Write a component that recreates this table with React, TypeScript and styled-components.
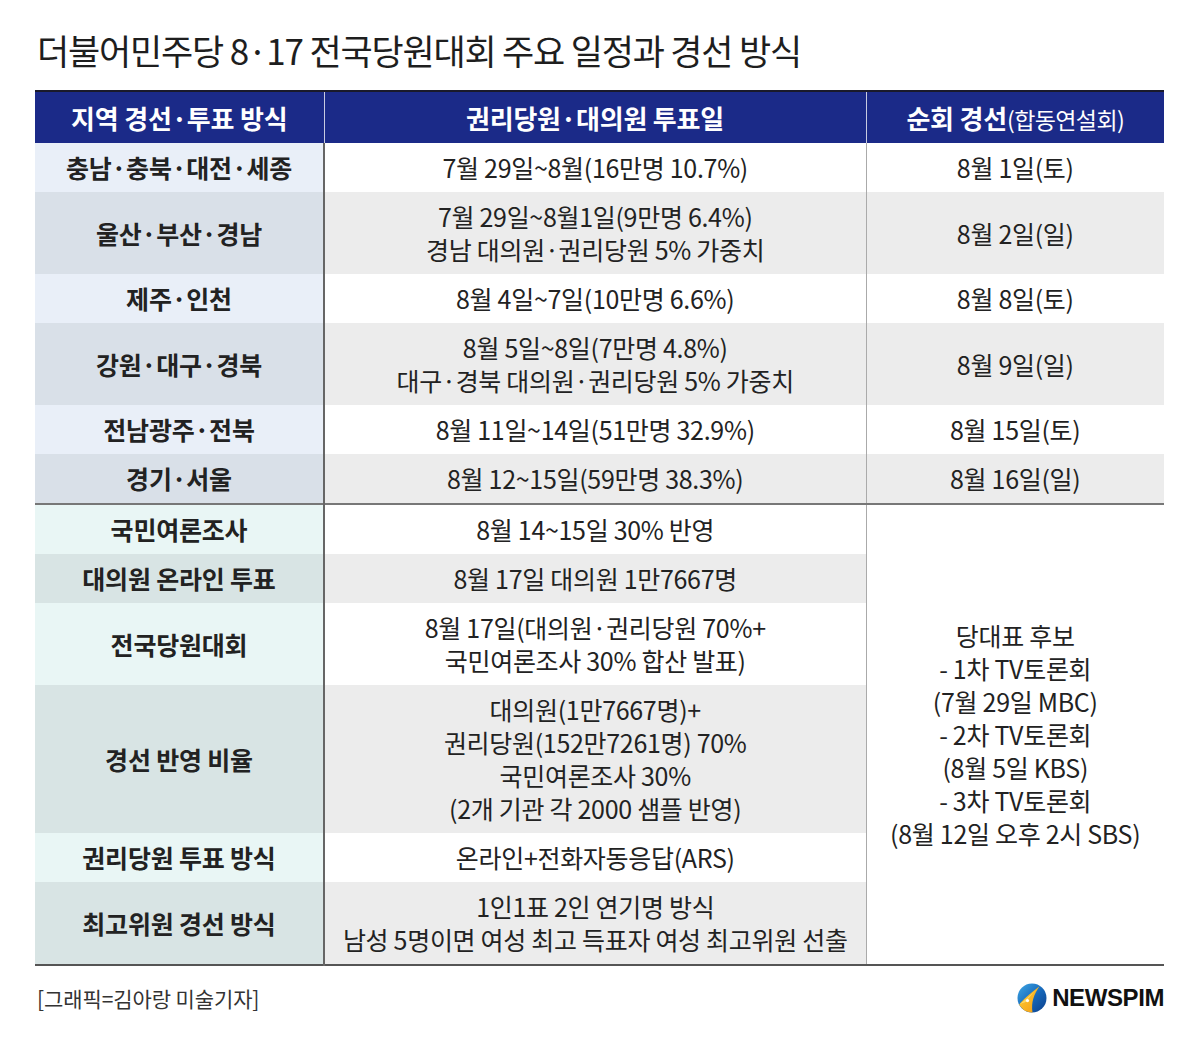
import React from "react";
import styled, { createGlobalStyle } from "styled-components";

const Global = createGlobalStyle`
  html, body { margin: 0; padding: 0; background: #fff; }
  body { font-family: "Noto Sans CJK KR", "Noto Sans", sans-serif; color: #222; }
`;

const Page = styled.div`
  width: 1200px;
  height: 1048px;
  box-sizing: border-box;
  padding: 29px 36px 0 35px;
  display: flex;
  flex-direction: column;
`;

const Title = styled.h1`
  margin: 0 0 0 2px;
  font-size: 35px;
  line-height: 42px;
  font-weight: 400;
  letter-spacing: -1.2px;
  color: #1e1e1e;
`;

const Table = styled.table`
  margin-top: 19px;
  width: 1129px;
  border-collapse: collapse;
  table-layout: fixed;
  border-bottom: 2px solid #555;
`;

const HeadCell = styled.th<{ $last?: boolean }>`
  background: #1b2a88;
  color: #fff;
  height: 52px;
  padding: 0;
  box-sizing: border-box;
  font-size: 26px;
  font-weight: 700;
  letter-spacing: -0.2px;
  border-top: 2px solid #1a1a2a;
  border-right: ${(p) => (p.$last ? "none" : "1px solid #c8cbe0")};
  text-align: center;
  vertical-align: middle;
`;

const Light = styled.span`
  font-weight: 400;
  font-size: 23px;
  letter-spacing: -0.6px;
`;

const LabelCell = styled.td<{ $bg: string; $sep?: boolean }>`
  background: ${(p) => p.$bg};
  font-weight: 700;
  font-size: 25px;
  line-height: 33px;
  letter-spacing: -0.2px;
  color: #222;
  text-align: center;
  vertical-align: middle;
  padding: 8px 0;
  border-right: 2px solid #666;
  border-top: ${(p) => (p.$sep ? "2px solid #777" : "none")};
`;

const DataCell = styled.td<{ $bg: string; $sep?: boolean; $right?: boolean }>`
  background: ${(p) => p.$bg};
  font-weight: 400;
  font-size: 25px;
  line-height: 33px;
  letter-spacing: -0.3px;
  color: #222;
  text-align: center;
  vertical-align: middle;
  padding: 8px 0;
  border-right: ${(p) => (p.$right ? "none" : "1px solid #aaa")};
  border-top: ${(p) => (p.$sep ? "2px solid #777" : "none")};
  white-space: nowrap;
`;

const Footer = styled.div`
  margin-top: 17px;
  display: flex;
  align-items: center;
  justify-content: space-between;
`;

const Credit = styled.div`
  font-size: 21px;
  letter-spacing: -0.1px;
  color: #333;
  padding-left: 2px;
`;

const Logo = styled.div`
  display: flex;
  align-items: center;
  gap: 5px;
`;

const LogoText = styled.span`
  font-family: "Liberation Sans", Arial, sans-serif;
  font-weight: 700;
  font-size: 24px;
  letter-spacing: -0.4px;
  color: #111;
`;

type Row = { label: string; data: string[]; third?: string[] };

const top: Row[] = [
  { label: "충남·충북·대전·세종", data: ["7월 29일~8월(16만명 10.7%)"], third: ["8월 1일(토)"] },
  { label: "울산·부산·경남", data: ["7월 29일~8월1일(9만명 6.4%)", "경남 대의원·권리당원 5% 가중치"], third: ["8월 2일(일)"] },
  { label: "제주·인천", data: ["8월 4일~7일(10만명 6.6%)"], third: ["8월 8일(토)"] },
  { label: "강원·대구·경북", data: ["8월 5일~8일(7만명 4.8%)", "대구·경북 대의원·권리당원 5% 가중치"], third: ["8월 9일(일)"] },
  { label: "전남광주·전북", data: ["8월 11일~14일(51만명 32.9%)"], third: ["8월 15일(토)"] },
  { label: "경기·서울", data: ["8월 12~15일(59만명 38.3%)"], third: ["8월 16일(일)"] },
];

const bottom: Row[] = [
  { label: "국민여론조사", data: ["8월 14~15일 30% 반영"] },
  { label: "대의원 온라인 투표", data: ["8월 17일 대의원 1만7667명"] },
  { label: "전국당원대회", data: ["8월 17일(대의원·권리당원 70%+", "국민여론조사 30% 합산 발표)"] },
  { label: "경선 반영 비율", data: ["대의원(1만7667명)+", "권리당원(152만7261명) 70%", "국민여론조사 30%", "(2개 기관 각 2000 샘플 반영)"] },
  { label: "권리당원 투표 방식", data: ["온라인+전화자동응답(ARS)"] },
  { label: "최고위원 경선 방식", data: ["1인1표 2인 연기명 방식", "남성 5명이면 여성 최고 득표자 여성 최고위원 선출"] },
];

const rightBlock = [
  "당대표 후보",
  "- 1차 TV토론회",
  "(7월 29일 MBC)",
  "- 2차 TV토론회",
  "(8월 5일 KBS)",
  "- 3차 TV토론회",
  "(8월 12일 오후 2시 SBS)",
];

const Lines = ({ lines }: { lines: string[] }) => (
  <>
    {lines.map((l, i) => (
      <React.Fragment key={i}>
        {i > 0 && <br />}
        {l}
      </React.Fragment>
    ))}
  </>
);

const LogoMark = () => (
  <svg width="30" height="30" viewBox="0 0 30 30">
    <defs>
      <linearGradient id="lgb" x1="0" y1="0" x2="1" y2="1">
        <stop offset="0" stopColor="#3fa9e6" />
        <stop offset="0.55" stopColor="#1565b8" />
        <stop offset="1" stopColor="#0d3f8a" />
      </linearGradient>
      <linearGradient id="lgy" x1="0" y1="0" x2="1" y2="1">
        <stop offset="0" stopColor="#ffd23a" />
        <stop offset="1" stopColor="#f29a12" />
      </linearGradient>
    </defs>
    <circle cx="15" cy="15" r="14.5" fill="url(#lgb)" />
    <path d="M2.2 21.5 C6 17 11 12 22.5 3.2 C17 11 14 19 15.5 29.4 C12 29.4 9 28.8 6.5 26.8 C5 25.2 3.2 23.6 2.2 21.5 Z" fill="url(#lgy)" />
    <path d="M2.2 21.5 C7 18 12 14 22.5 3.2 C14 12 10 16.5 9.5 18.5 C6.5 19.8 4.5 20.5 2.2 21.5 Z" fill="#fbe27a" opacity="0.8" />
    <circle cx="10.5" cy="17.6" r="1.6" fill="#fff" />
  </svg>
);

export default function App() {
  return (
    <>
      <Global />
      <Page>
        <Title>더불어민주당 8·17 전국당원대회 주요 일정과 경선 방식</Title>
        <Table>
          <colgroup>
            <col style={{ width: 289 }} />
            <col style={{ width: 542 }} />
            <col style={{ width: 298 }} />
          </colgroup>
          <thead>
            <tr>
              <HeadCell>지역 경선·투표 방식</HeadCell>
              <HeadCell>권리당원·대의원 투표일</HeadCell>
              <HeadCell $last>
                순회 경선<Light>(합동연설회)</Light>
              </HeadCell>
            </tr>
          </thead>
          <tbody>
            {top.map((r, i) => {
              const odd = i % 2 === 1;
              return (
                <tr key={r.label}>
                  <LabelCell $bg={odd ? "#d9e0e8" : "#e9eff8"}>{r.label}</LabelCell>
                  <DataCell $bg={odd ? "#ececec" : "#ffffff"}>
                    <Lines lines={r.data} />
                  </DataCell>
                  <DataCell $bg={odd ? "#ececec" : "#ffffff"} $right>
                    <Lines lines={r.third || []} />
                  </DataCell>
                </tr>
              );
            })}
            {bottom.map((r, i) => {
              const odd = i % 2 === 1;
              const first = i === 0;
              return (
                <tr key={r.label}>
                  <LabelCell $bg={odd ? "#d8e4e4" : "#e9f6f5"} $sep={first}>
                    {r.label}
                  </LabelCell>
                  <DataCell $bg={odd ? "#ececec" : "#ffffff"} $sep={first}>
                    <Lines lines={r.data} />
                  </DataCell>
                  {first && (
                    <DataCell $bg="#ffffff" $sep $right rowSpan={bottom.length}>
                      <Lines lines={rightBlock} />
                    </DataCell>
                  )}
                </tr>
              );
            })}
          </tbody>
        </Table>
        <Footer>
          <Credit>[그래픽=김아랑 미술기자]</Credit>
          <Logo>
            <LogoMark />
            <LogoText>NEWSPIM</LogoText>
          </Logo>
        </Footer>
      </Page>
    </>
  );
}
